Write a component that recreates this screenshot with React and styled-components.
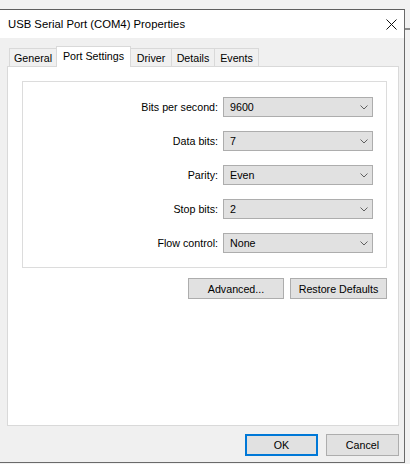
import React from 'react';
import styled, { createGlobalStyle } from 'styled-components';

const GlobalStyle = createGlobalStyle`
  html, body {
    margin: 0;
    padding: 0;
    background: #f2f2f2;
  }
  body {
    font-family: "Liberation Sans", Arial, sans-serif;
    font-size: 10.7px;
    color: #000;
  }
`;

const fields = [
  { label: 'Bits per second:', value: '9600' },
  { label: 'Data bits:', value: '7' },
  { label: 'Parity:', value: 'Even' },
  { label: 'Stop bits:', value: '2' },
  { label: 'Flow control:', value: 'None' }
];

const tabs = [
  { title: 'General', width: 48 },
  { title: 'Port Settings', width: 75, active: true },
  { title: 'Driver', width: 42 },
  { title: 'Details', width: 44 },
  { title: 'Events', width: 45 }
];

function Chevron() {
  return (
    <svg width="8" height="5" viewBox="0 0 8 5">
      <polyline points="0.5,0.5 4,4 7.5,0.5" fill="none" stroke="#606060" strokeWidth="1" />
    </svg>
  );
}

function CloseIcon() {
  return (
    <svg width="11" height="11" viewBox="0 0 11 11">
      <path d="M0.5 0.5 L10.5 10.5 M10.5 0.5 L0.5 10.5" stroke="#111" strokeWidth="1" />
    </svg>
  );
}

function Combo({ value }) {
  return (
    <Select>
      <span>{value}</span>
      <Arrow><Chevron /></Arrow>
    </Select>
  );
}

function App() {
  return (
    <Screen>
      <GlobalStyle />
      <Window>
        <TitleBar>
          <Title>USB Serial Port (COM4) Properties</Title>
          <CloseButton><CloseIcon /></CloseButton>
        </TitleBar>
        <Body>
          <TabRow>
            {tabs.map(t => (
              <Tab key={t.title} $active={t.active} $width={t.width}>{t.title}</Tab>
            ))}
          </TabRow>
          <Panel>
            <GroupBox>
              {fields.map(f => (
                <React.Fragment key={f.label}>
                  <Label>{f.label}</Label>
                  <Combo value={f.value} />
                </React.Fragment>
              ))}
            </GroupBox>
            <ButtonRow>
              <Button $width={96}>Advanced...</Button>
              <Button $width={97}>Restore Defaults</Button>
            </ButtonRow>
          </Panel>
          <Footer>
            <Button $width={73} $height={22} $default>OK</Button>
            <Button $width={73} $height={22}>Cancel</Button>
          </Footer>
        </Body>
      </Window>
      <BehindEdge>
        <EdgeBand />
      </BehindEdge>
    </Screen>
  );
}

const Screen = styled.div`
  display: flex;
  height: 464px;
  padding-top: 9px;
  box-sizing: border-box;
`;

const Window = styled.div`
  width: 405px;
  height: 454px;
  box-sizing: border-box;
  display: flex;
  flex-direction: column;
  border-top: 1px solid #5f5f5f;
  border-right: 1px solid #6a6a6a;
  border-bottom: 1px solid #6a6a6a;
  background: #f0f0f0;
`;

const BehindEdge = styled.div`
  flex: 1;
  padding-top: 19px;
  background: #f2f2f2;
`;

const EdgeBand = styled.div`
  height: 2px;
  background: #8c8c8c;
`;

const TitleBar = styled.div`
  height: 28px;
  display: flex;
  align-items: center;
  justify-content: space-between;
  background: #fff;
  padding-left: 8px;
  padding-right: 7px;
`;

const Title = styled.div`
  font-size: 11.3px;
`;

const CloseButton = styled.div`
  display: flex;
  align-items: center;
  padding-top: 1px;
`;

const Body = styled.div`
  flex: 1;
  display: flex;
  flex-direction: column;
  padding: 8px 5px 6px 7px;
`;

const TabRow = styled.div`
  display: flex;
  align-items: flex-end;
  padding-left: 2px;
  margin-bottom: -1px;
  position: relative;
  z-index: 1;
`;

const Tab = styled.div`
  box-sizing: border-box;
  width: ${p => p.$width}px;
  height: ${p => (p.$active ? 21 : 19)}px;
  border: 1px solid #d9d9d9;
  border-bottom: ${p => (p.$active ? 'none' : '1px solid #d9d9d9')};
  background: ${p => (p.$active ? '#fff' : '#f0f0f0')};
  display: flex;
  align-items: center;
  justify-content: center;
  padding-bottom: ${p => (p.$active ? 2 : 0)}px;
  position: relative;
  z-index: ${p => (p.$active ? 2 : 1)};

  & + & {
    margin-left: -1px;
  }
`;

const Panel = styled.div`
  flex: 1;
  display: flex;
  flex-direction: column;
  background: #fff;
  border: 1px solid #d9d9d9;
  padding: 14px 11px 0 14px;
`;

const GroupBox = styled.div`
  display: grid;
  grid-template-columns: 1fr 150px;
  column-gap: 5px;
  row-gap: 14px;
  align-items: center;
  border: 1px solid #dcdcdc;
  padding: 15px 13px 14px 0;
`;

const Label = styled.div`
  text-align: right;
`;

const Select = styled.div`
  box-sizing: border-box;
  height: 20px;
  display: flex;
  align-items: center;
  justify-content: space-between;
  background: #e1e1e1;
  border: 1px solid #adadad;
  padding-left: 6px;
`;

const Arrow = styled.div`
  width: 17px;
  display: flex;
  align-items: center;
  justify-content: center;
`;

const ButtonRow = styled.div`
  display: flex;
  justify-content: flex-end;
  gap: 6px;
  margin-top: 10px;
`;

const Footer = styled.div`
  display: flex;
  justify-content: flex-end;
  gap: 8px;
  margin-top: 8px;
`;

const Button = styled.div`
  box-sizing: border-box;
  width: ${p => p.$width}px;
  height: ${p => p.$height || 21}px;
  display: flex;
  align-items: center;
  justify-content: center;
  background: #e1e1e1;
  border: ${p => (p.$default ? '2px solid #0078d7' : '1px solid #adadad')};
`;

export default App;
